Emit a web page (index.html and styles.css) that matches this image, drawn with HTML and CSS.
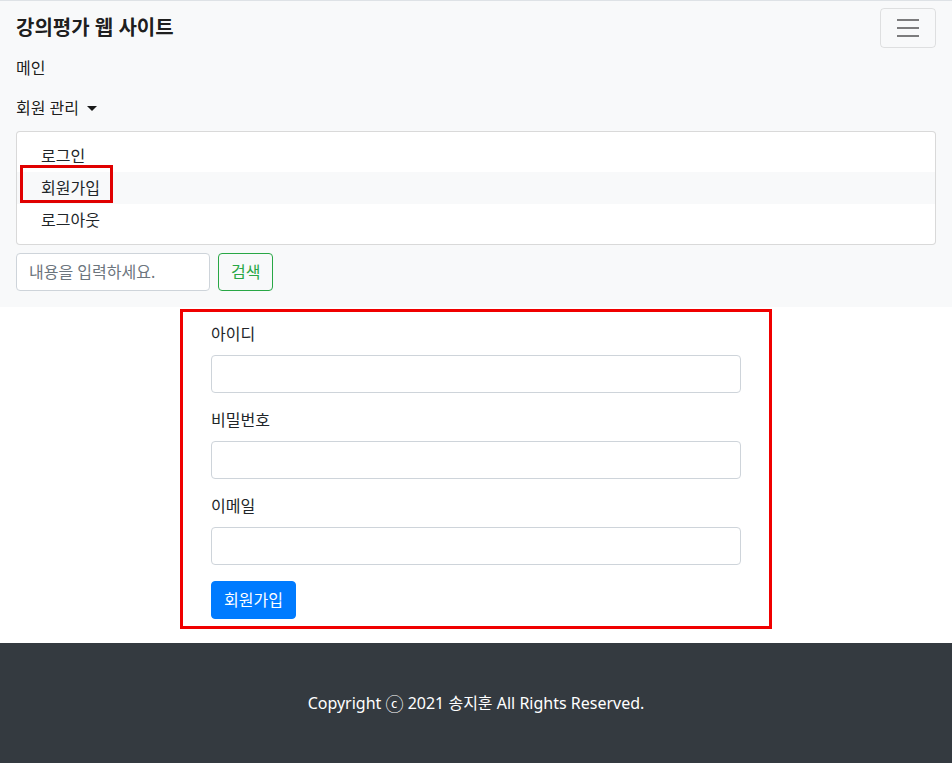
FILE: index.html
```html
<!DOCTYPE html>
<html lang="ko">
<head>
  <meta charset="UTF-8" />
  <meta name="viewport" content="width=device-width, initial-scale=1.0"/>
  <title>강의평가 웹 사이트</title>
  <link rel="stylesheet" href="styles.css">
</head>
<body>
  <nav class="navbar">
    <div class="navbar-top">
      <a class="brand" href="#">강의평가 웹 사이트</a>
      <button class="toggler" type="button">
        <svg width="30" height="30" viewBox="0 0 30 30">
          <path d="M4 7h22M4 15h22M4 23h22" stroke="rgba(0,0,0,0.5)" stroke-width="2" stroke-linecap="butt"/>
        </svg>
      </button>
    </div>
    <ul class="nav">
      <li><a class="nav-link" href="#">메인</a></li>
      <li>
        <a class="nav-link dropdown-toggle" href="#">회원 관리</a>
        <div class="dropdown-menu">
          <a class="dropdown-item" href="#">로그인</a>
          <a class="dropdown-item active" href="#">회원가입<span class="mark"></span></a>
          <a class="dropdown-item" href="#">로그아웃</a>
        </div>
      </li>
    </ul>
    <form class="search">
      <input type="text" placeholder="내용을 입력하세요.">
      <button type="button" class="btn-search">검색</button>
    </form>
  </nav>

  <section class="join">
    <form>
      <div class="form-group">
        <label>아이디</label>
        <input type="text">
      </div>
      <div class="form-group">
        <label>비밀번호</label>
        <input type="password">
      </div>
      <div class="form-group">
        <label>이메일</label>
        <input type="email">
      </div>
      <button type="button" class="btn-join">회원가입</button>
    </form>
  </section>

  <footer>
    Copyright <span class="copy">ⓒ</span> 2021 송지훈 All Rights Reserved.
  </footer>
</body>
</html>
```

FILE: styles.css
```css
body {
  margin: 0;
  background: #fff;
  color: #212529;
  font-family: 'Noto Sans', 'Noto Sans CJK KR', sans-serif;
  font-size: 16px;
  line-height: 24px;
}

a {
  color: inherit;
  text-decoration: none;
}

.navbar {
  background: #f8f9fa;
  border-top: 1px solid #dee2e6;
  padding: 7px 16px 8px;
}

.navbar-top {
  display: flex;
  justify-content: space-between;
  align-items: center;
}

.brand {
  font-size: 20px;
  font-weight: bold;
  color: rgba(0, 0, 0, 0.9);
  line-height: 30px;
}

.toggler {
  width: 56px;
  height: 40px;
  padding: 0;
  background: transparent;
  border: 1px solid rgba(0, 0, 0, 0.1);
  border-radius: 4px;
  display: flex;
  align-items: center;
  justify-content: center;
}

.nav {
  list-style: none;
  margin: 0;
  padding: 0;
}

.nav-link {
  display: block;
  padding: 8px 0;
  color: rgba(0, 0, 0, 0.9);
}

.dropdown-toggle::after {
  content: "";
  display: inline-block;
  margin-left: 8px;
  vertical-align: 3px;
  border-top: 5px solid;
  border-left: 5px solid transparent;
  border-right: 5px solid transparent;
}

.dropdown-menu {
  margin-top: 3px;
  padding: 8px 0;
  background: #fff;
  border: 1px solid rgba(0, 0, 0, 0.15);
  border-radius: 4px;
}

.dropdown-item {
  display: block;
  position: relative;
  padding: 4px 24px;
  color: #212529;
}

.dropdown-item.active {
  background: #f8f9fa;
}

.mark {
  position: absolute;
  left: 3px;
  top: -7px;
  width: 87px;
  height: 32px;
  border: 3px solid #e00000;
}

.search {
  display: flex;
  margin: 8px 0;
}

.search input {
  width: 194px;
  height: 38px;
  box-sizing: border-box;
  padding: 6px 12px;
  border: 1px solid #ced4da;
  border-radius: 4px;
  font: inherit;
  color: #495057;
}

.search input::placeholder {
  color: #6c757d;
}

.btn-search {
  margin-left: 8px;
  height: 38px;
  padding: 6px 12px;
  background: transparent;
  border: 1px solid #28a745;
  border-radius: 4px;
  color: #28a745;
  font: inherit;
}

.join {
  width: 530px;
  margin: 2px auto 0;
  padding: 10px 28px 7px;
  border: 3px solid #f00000;
}

.form-group {
  margin-bottom: 15px;
}

.form-group label {
  display: block;
  margin-bottom: 9px;
}

.form-group input {
  display: block;
  width: 100%;
  height: 38px;
  box-sizing: border-box;
  padding: 6px 12px;
  border: 1px solid #ced4da;
  border-radius: 4px;
  font: inherit;
}

.btn-join {
  margin-top: 1px;
  height: 38px;
  padding: 6px 12px;
  background: #007bff;
  border: 1px solid #007bff;
  border-radius: 4px;
  color: #fff;
  font: inherit;
  vertical-align: top;
}

footer {
  margin-top: 14px;
  background: #343a40;
  color: #fff;
  text-align: center;
  padding: 48px 0;
}

.copy {
  font-family: 'Noto Sans CJK KR', sans-serif;
  font-size: 18px;
  line-height: 0;
  vertical-align: -2px;
}
```
